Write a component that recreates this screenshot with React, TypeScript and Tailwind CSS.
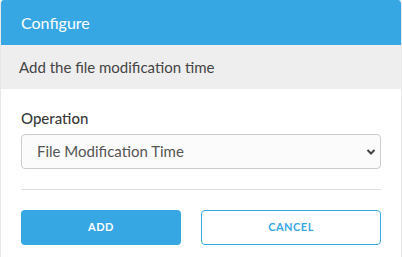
import React from "react";

export default function App() {
  return (
    <div className="w-[402px] h-[257px] bg-white" style={{ fontFamily: "Lato, 'Open Sans', sans-serif" }}>
      <div className="h-full flex flex-col border-l border-r border-[#e8e8e8] rounded-t-[4px] overflow-hidden">
        <div className="h-[45px] bg-[#37a7e3] flex items-center px-[20px] text-white text-[16px]">Configure</div>
        <div className="h-[44px] bg-[#eeeeee] flex items-center px-[18px] text-[15px] text-[#444]">Add the file modification time</div>
        <div className="flex-1 px-[20px] pt-[19px]">
          <div className="text-[15px] leading-[20px] font-medium text-[#3a3a3a]">Operation</div>
          <div className="relative mt-[6px] h-[35px] border border-[#cccccc] rounded-[4px] bg-[#fbfbfb] flex items-center pl-[15px] pr-[4px] text-[15px] text-[#555]">
            <span className="flex-1">File Modification Time</span>
            <svg width="10" height="8" viewBox="0 0 10 8">
              <path d="M1.5 2 L5 5.5 L8.5 2" fill="none" stroke="#444" strokeWidth="2" />
            </svg>
          </div>
          <div className="mt-[20px] h-px bg-[#dddddd]" />
          <div className="mt-[20px] flex gap-[20px]">
            <button className="w-[160px] h-[35px] rounded-[4px] bg-[#37a7e3] text-white text-[11px] font-bold tracking-[0.5px]">ADD</button>
            <button className="w-[180px] h-[35px] rounded-[4px] border border-[#37a7e3] text-[#37a7e3] bg-white text-[11px] font-bold tracking-[0.5px]">CANCEL</button>
          </div>
        </div>
      </div>
    </div>
  );
}
